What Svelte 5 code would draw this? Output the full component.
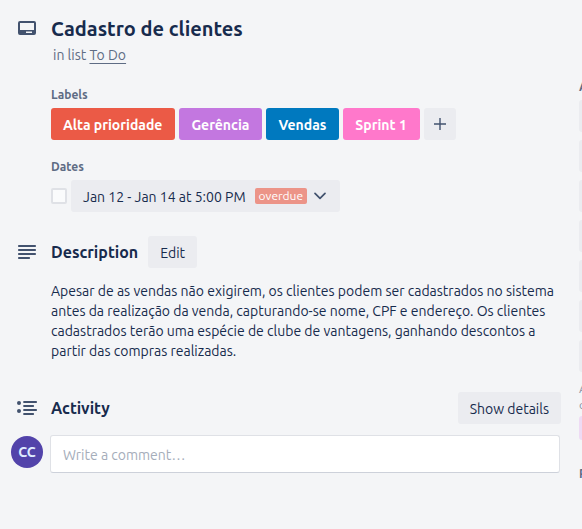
<script>
  const labels = [
    { name: 'Alta prioridade', tone: 'red' },
    { name: 'Gerência', tone: 'purple' },
    { name: 'Vendas', tone: 'blue' },
    { name: 'Sprint 1', tone: 'pink' }
  ];
  const actions = [1, 2, 3, 4, 5, 6, 7];
  let done = $state(false);
  let comment = $state('');
</script>

<div class="window">
  <main>
    <header class="section">
      <svg class="icon" viewBox="0 0 18 14" width="18" height="14" aria-hidden="true">
        <path fill="currentColor" fill-rule="evenodd" d="M2 0h14a2 2 0 0 1 2 2v10a2 2 0 0 1-2 2H2a2 2 0 0 1-2-2V2a2 2 0 0 1 2-2zm0 2v7h14V2zm6 8.500v1.500h6v-1.500z" />
      </svg>
      <div>
        <h1>Cadastro de clientes</h1>
        <p class="list">in list <a href="#todo">To Do</a></p>
      </div>
    </header>

    <div class="details">
      <h3>Labels</h3>
      <div class="labels">
        {#each labels as label}
          <button class="label {label.tone}">{label.name}</button>
        {/each}
        <button class="add" aria-label="Add label">
          <svg viewBox="0 0 12 12" width="12" height="12"><path d="M6 0v12M0 6h12" stroke="currentColor" stroke-width="1.400" /></svg>
        </button>
      </div>

      <h3>Dates</h3>
      <div class="dates">
        <input type="checkbox" aria-label="Mark as complete" bind:checked={done} />
        <button class="date">
          <span>Jan 12 - Jan 14 at 5:00 PM</span>
          <span class="overdue">overdue</span>
          <svg viewBox="0 0 12 8" width="12" height="8"><path d="M1 1.300l5 5 5-5" fill="none" stroke="currentColor" stroke-width="1.700" stroke-linecap="round" stroke-linejoin="round" /></svg>
        </button>
      </div>
    </div>

    <section class="section description">
      <svg class="icon" viewBox="0 0 18 14" width="18" height="14" aria-hidden="true">
        <path d="M.8 1h16.400M.8 5h16.400M.8 9h16.400M.8 13h10.400" stroke="currentColor" stroke-width="1.800" stroke-linecap="round" />
      </svg>
      <div class="bar">
        <h2>Description</h2>
        <button class="edit">Edit</button>
      </div>
      <p class="text">Apesar de as vendas não exigirem, os clientes podem ser cadastrados no sistema antes da realização da venda, capturando-se nome, CPF e endereço. Os clientes cadastrados terão uma espécie de clube de vantagens, ganhando descontos a partir das compras realizadas.</p>
    </section>

    <section class="section activity">
      <svg class="icon" viewBox="0 0 20 16" width="20" height="16" aria-hidden="true">
        <circle cx="2" cy="3" r="2" fill="currentColor" />
        <circle cx="2" cy="11" r="2" fill="currentColor" />
        <path d="M7 2h12.200M7 6h9.200M7 10h12.200M7 14h9.200" stroke="currentColor" stroke-width="1.800" stroke-linecap="round" />
      </svg>
      <div class="bar between">
        <h2>Activity</h2>
        <button class="show">Show details</button>
      </div>
      <span class="avatar">CC</span>
      <input class="comment" type="text" aria-label="Write a comment" placeholder="Write a comment…" bind:value={comment} />
    </section>
  </main>

  <aside>
    <h3>A</h3>
    {#each actions as action}
      <button class="action" aria-label="Card action {action}"></button>
    {/each}
    <p>A<br />c</p>
    <button class="trial" aria-label="Upgrade"></button>
    <h3>P</h3>
  </aside>
</div>

<style>
  :global(body) {
    background: #f4f5f7;
  }
  .window {
    display: flex;
    gap: 18px;
    min-height: 100vh;
    overflow: hidden;
    box-sizing: border-box;
    color: #172b4d;
    background: #f4f5f7;
    font: 14px/20px Ubuntu, 'Noto Sans', sans-serif;
  }
  main {
    flex: 1;
    min-width: 0;
    padding: 16px 0 24px 11px;
  }
  h1, h2, h3, p {
    margin: 0;
  }
  h1 {
    font-size: 20px;
    line-height: 26px;
    font-weight: 700;
  }
  h2 {
    font-size: 16px;
    line-height: 20px;
    font-weight: 700;
  }
  h3 {
    color: #5e6c84;
    font-size: 12px;
    line-height: 20px;
    font-weight: 700;
  }
  button {
    height: 32px;
    padding: 0 12px;
    border: 0;
    border-radius: 3px;
    background: #ebecf0;
    color: #172b4d;
    font: inherit;
    line-height: 20px;
    white-space: nowrap;
    cursor: pointer;
  }
  svg {
    display: block;
    flex: none;
    color: #42526e;
  }
  .section {
    display: grid;
    grid-template-columns: 32px minmax(0, 1fr);
    column-gap: 8px;
  }
  .icon {
    justify-self: center;
    align-self: center;
  }
  header .icon {
    align-self: start;
    margin-top: 5px;
  }
  .list {
    padding: 3px 0 0 2px;
    color: #5e6c84;
  }
  .list a {
    color: inherit;
    text-decoration: underline;
    text-underline-offset: 3px;
  }
  .details {
    padding: 20px 0 24px 40px;
  }
  .details h3 {
    margin-bottom: 3px;
  }
  .labels {
    display: flex;
    gap: 4px;
    margin-bottom: 17px;
  }
  .label {
    padding: 2px 13px 0 12px;
    color: #fff;
    font-weight: 700;
  }
  .red { background: #eb5a46; }
  .purple { background: #c377e0; }
  .blue { background: #0079bf; }
  .pink { background: #ff78cb; }
  .add {
    padding: 0 10px;
  }
  .dates {
    display: flex;
    align-items: center;
    gap: 4px;
  }
  .dates input {
    appearance: none;
    width: 16px;
    height: 16px;
    margin: 0;
    box-sizing: border-box;
    border: 2px solid #dfe1e6;
    border-radius: 2px;
    background: #fafbfc;
  }
  .dates input:checked {
    background: #0079bf;
  }
  .date {
    display: flex;
    align-items: center;
    padding: 0 14px 0 12px;
  }
  .date > span:first-child {
    padding-top: 2px;
  }
  .overdue {
    margin: 0 7px 0 9px;
    padding: 0 4px;
    border-radius: 2px;
    background: #ec9488;
    color: #fff;
    font-size: 12px;
    line-height: 16px;
  }
  .bar {
    display: flex;
    align-items: center;
    gap: 10px;
  }
  .bar button {
    padding-top: 2px;
  }
  .between {
    justify-content: space-between;
  }
  .text {
    grid-column: 2;
    margin-top: 13px;
  }
  .activity {
    margin-top: 31px;
    row-gap: 11px;
  }
  .avatar {
    display: grid;
    place-items: center;
    align-self: start;
    height: 32px;
    margin-top: 1px;
    border-radius: 50%;
    background: #5243aa;
    color: #deebff;
    font-weight: 600;
  }
  .comment {
    height: 38px;
    margin: 0 1px 0 -1px;
    padding: 2px 12px 0;
    box-sizing: border-box;
    min-width: 0;
    border: 1px solid #dfe1e6;
    border-bottom-color: #cdd1da;
    border-radius: 3px;
    background: #fff;
    color: #172b4d;
    font: inherit;
  }
  .comment::placeholder {
    color: #a5adba;
    opacity: 1;
  }
  aside {
    flex: none;
    width: 168px;
    margin-right: -165px;
    padding-top: 77px;
  }
  aside button {
    display: block;
    width: 100%;
  }
  .action {
    margin-bottom: 8px;
  }
  aside h3 + .action {
    margin-top: 3px;
  }
  aside p {
    padding-top: 1px;
    color: #8993a4;
    font-size: 12px;
    line-height: 16px;
  }
  .trial {
    height: 24px;
    margin: 3px 0 24px;
    background: #eedbf4;
  }
</style>
